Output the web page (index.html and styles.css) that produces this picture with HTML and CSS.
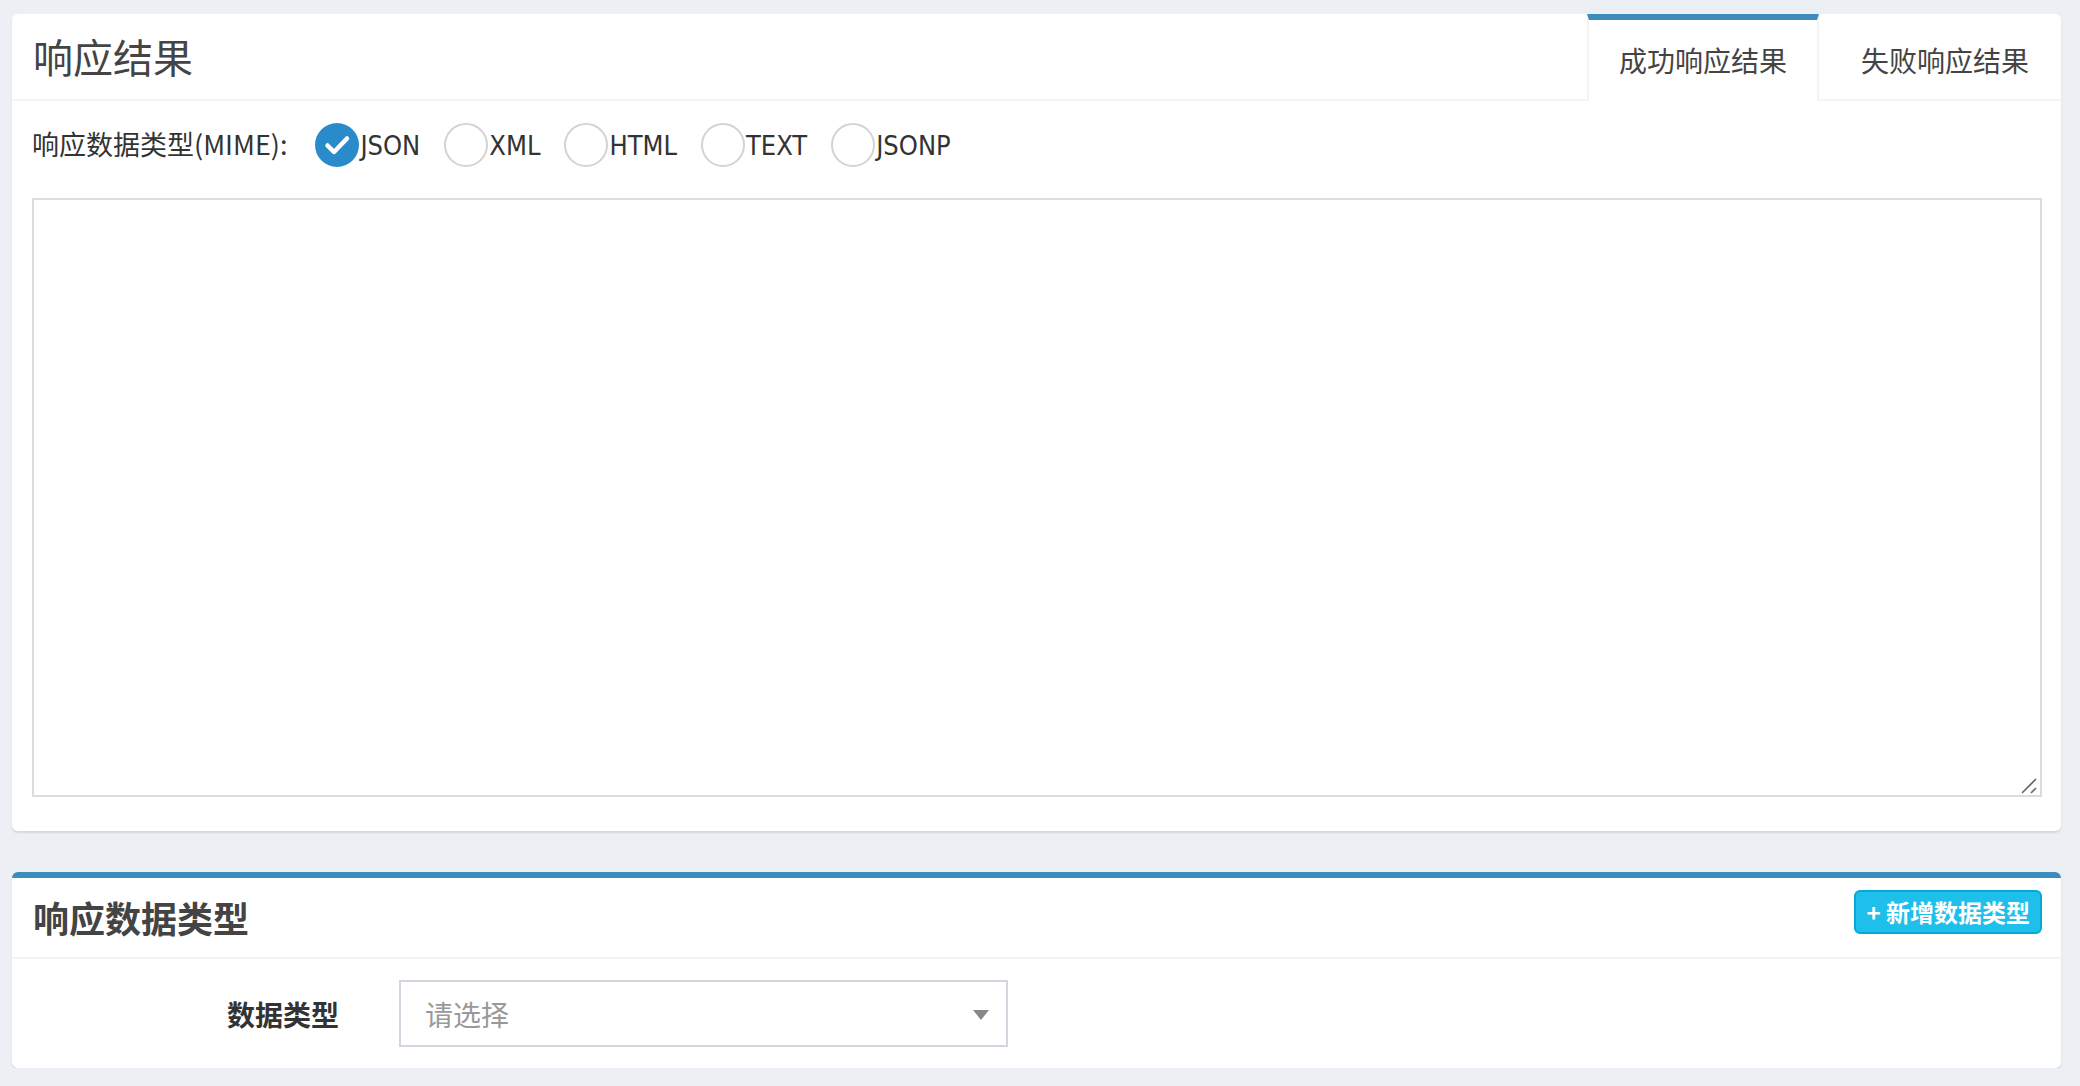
FILE: index.html
```html
<!DOCTYPE html>
<html lang="zh-CN">
<head>
<meta charset="utf-8">
<title>响应结果</title>
<link rel="stylesheet" href="styles.css">
</head>
<body>
<div class="page">
  <section class="card tabs-card">
    <div class="tabs-header">
      <div class="tabs-title">响应结果</div>
      <ul class="tabs">
        <li class="tab active">成功响应结果</li>
        <li class="tab">失败响应结果</li>
      </ul>
    </div>
    <div class="tab-content">
      <div class="mime-row">
        <span class="mime-label">响应数据类型(MIME):</span>
        <label class="radio"><span class="radio-box checked"><svg viewBox="0 0 44 44" width="44" height="44"><polyline points="12.5,22.5 19,29 32,15.5" fill="none" stroke="#fff" stroke-width="4.5" stroke-linecap="round" stroke-linejoin="round"/></svg></span>JSON</label>
        <label class="radio"><span class="radio-box"></span>XML</label>
        <label class="radio"><span class="radio-box"></span>HTML</label>
        <label class="radio"><span class="radio-box"></span>TEXT</label>
        <label class="radio"><span class="radio-box"></span>JSONP</label>
      </div>
      <div class="textarea-wrap">
        <textarea class="response-text"></textarea>
        <svg class="grip" viewBox="0 0 18 18" width="18" height="18"><line x1="1" y1="17" x2="15" y2="3" stroke="#666" stroke-width="1.6"/><line x1="10" y1="17" x2="15" y2="12" stroke="#666" stroke-width="1.6"/></svg>
      </div>
    </div>
  </section>

  <section class="card box">
    <div class="box-header">
      <h3 class="box-title">响应数据类型</h3>
      <button class="btn-add">+ 新增数据类型</button>
    </div>
    <div class="box-body">
      <div class="form-row">
        <label class="form-label">数据类型</label>
        <div class="select">
          <span class="placeholder">请选择</span>
          <span class="arrow"></span>
        </div>
      </div>
    </div>
  </section>
</div>
</body>
</html>
```

FILE: styles.css
```css
html, body {
  margin: 0;
  padding: 0;
}
body {
  background: #ecf0f5;
  font-family: "Noto Sans CJK SC", "Noto Sans", sans-serif;
  color: #333;
}
.page {
  padding: 14px 19px 0 12px;
}
.card {
  background: #fff;
  border-radius: 6px;
  box-shadow: 0 2px 2px rgba(0, 0, 0, 0.1);
}

/* tabs card */
.tabs-header {
  display: flex;
  justify-content: space-between;
  height: 85px;
  border-bottom: 2px solid #f4f4f4;
}
.tabs-title {
  padding-left: 21px;
  font-size: 40px;
  line-height: 85px;
  color: #444;
}
.tabs {
  display: flex;
  list-style: none;
  margin: 0 0 -2px 0;
  padding: 0;
}
.tab {
  display: flex;
  align-items: center;
  padding: 0 30px 2px;
  margin-left: 10px;
  border-top: 6px solid transparent;
  border-left: 2px solid transparent;
  border-right: 2px solid transparent;
  font-size: 28px;
  color: #444;
}
.tab.active {
  border-top-color: #3c8dbc;
  border-left-color: #f4f4f4;
  border-right-color: #f4f4f4;
  background: #fff;
}
.tab-content {
  padding: 22px 19px 34px 20px;
}
.mime-row {
  display: flex;
  align-items: center;
  gap: 24px;
  height: 44px;
  font-size: 27px;
  color: #333;
}
.mime-label {
  margin-top: -3px;
  margin-right: 4px;
}
.radio {
  display: flex;
  align-items: center;
  font-family: "DejaVu Sans Condensed", "DejaVu Sans", "Noto Sans CJK SC", sans-serif;
  font-stretch: condensed;
  font-size: 27px;
  color: #333;
}
.radio-box {
  width: 44px;
  height: 44px;
  box-sizing: border-box;
  border: 2px solid #d3d3d3;
  border-radius: 50%;
  margin-right: 1px;
}
.radio-box.checked {
  border: none;
  background: #2a8bcb;
}
.radio-box svg {
  display: block;
}
.textarea-wrap {
  position: relative;
  margin-top: 31px;
}
.response-text {
  display: block;
  width: 100%;
  height: 599px;
  box-sizing: border-box;
  border: 2px solid #dcdcdc;
  resize: none;
  outline: none;
  margin: 0;
}
.grip {
  position: absolute;
  right: 3px;
  bottom: 3px;
}

/* second box */
.box {
  margin-top: 41px;
  border-top: 6px solid #3c8dbc;
}
.box-header {
  display: flex;
  justify-content: space-between;
  align-items: flex-start;
  height: 79px;
  padding: 0 19px 0 21px;
  border-bottom: 2px solid #f4f4f4;
}
.box-title {
  margin: 0;
  font-size: 36px;
  font-weight: bold;
  line-height: 79px;
  color: #444;
}
.btn-add {
  margin-top: 12px;
  height: 44px;
  padding: 0 10px;
  border: 2px solid #00acd6;
  border-radius: 6px;
  background: #1ebfea;
  color: #fff;
  font-family: "Noto Sans CJK SC", "Noto Sans", sans-serif;
  font-size: 24px;
  font-weight: bold;
  line-height: 38px;
}
.box-body {
  padding: 21px 20px;
}
.form-row {
  display: flex;
  align-items: center;
  gap: 60px;
}
.form-label {
  width: 307px;
  text-align: right;
  font-size: 28px;
  font-weight: bold;
  color: #333;
}
.select {
  display: flex;
  align-items: center;
  justify-content: space-between;
  width: 609px;
  height: 67px;
  box-sizing: border-box;
  border: 2px solid #d2d6de;
  padding: 0 17px 0 24px;
}
.placeholder {
  font-size: 28px;
  color: #999;
}
.arrow {
  width: 0;
  height: 0;
  margin-top: 3px;
  border-style: solid;
  border-width: 10px 8px 0 8px;
  border-color: #888 transparent transparent transparent;
}
```
